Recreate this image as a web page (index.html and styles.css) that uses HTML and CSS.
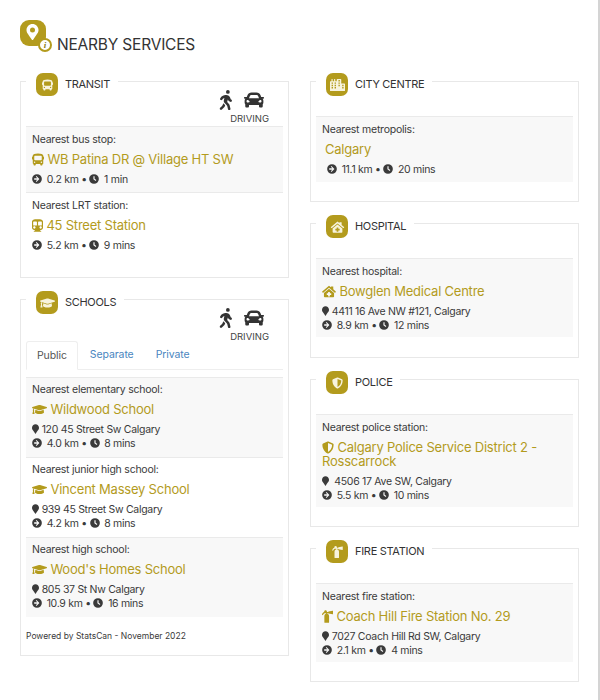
FILE: index.html
```html
<html>
<head>
    <link rel="stylesheet" href="styles.css">
</head>
<body>
<svg class="defs" width="0" height="0">
    <symbol id="i-pin" viewBox="0 0 384 512"><path d="M192 0C86 0 0 86 0 192c0 77 27 99 172 310 10 14 30 14 40 0 145-211 172-233 172-310C384 86 298 0 192 0z"/></symbol>
    <symbol id="i-pin-hole" viewBox="0 0 384 512"><path fill-rule="evenodd" d="M192 0C86 0 0 86 0 192c0 77 27 99 172 310 10 14 30 14 40 0 145-211 172-233 172-310C384 86 298 0 192 0zm0 272a80 80 0 1 1 0-160 80 80 0 0 1 0 160z"/></symbol>
    <symbol id="i-arrow" viewBox="0 0 512 512"><path fill-rule="evenodd" d="M256 8a248 248 0 1 1 0 496 248 248 0 0 1 0-496zm-28 97-34 34 78 77H112v80h160l-78 77 34 34 151-151z"/></symbol>
    <symbol id="i-clock" viewBox="0 0 512 512"><path fill-rule="evenodd" d="M256 8a248 248 0 1 1 0 496 248 248 0 0 1 0-496zm-30 104v158l116 84 34-46-90-66V112z"/></symbol>
    <symbol id="i-cap" viewBox="0 0 640 512"><path d="M622.34 153.2L343.4 67.5c-15.2-4.67-31.6-4.67-46.79 0L17.66 153.2c-23.54 7.23-23.54 38.36 0 45.59l48.63 14.94c-10.67 13.19-17.23 29.28-17.88 46.9C38.78 266.15 32 276.11 32 288c0 10.78 5.68 19.85 13.86 25.65L20.33 428.53C18.11 438.52 25.71 448 35.94 448h56.11c10.24 0 17.84-9.48 15.62-19.47L82.14 313.65C90.32 307.85 96 298.78 96 288c0-11.57-6.47-21.25-15.66-26.87.76-15.02 8.44-28.3 20.69-36.72L296.6 284.5c9.06 2.78 26.44 6.25 46.79 0l278.95-85.7c23.55-7.24 23.55-38.36 0-45.6zM352.79 315.09c-28.53 8.76-52.84 3.92-65.59 0l-145.02-44.55L128 384c0 35.35 85.96 64 192 64s192-28.65 192-64l-14.18-113.47-145.03 44.56z"/></symbol>
    <symbol id="i-bus" viewBox="0 0 512 512"><path d="M488 128h-8V80c0-44.8-99.2-80-224-80S32 35.2 32 80v48h-8c-13.25 0-24 10.74-24 24v80c0 13.25 10.75 24 24 24h8v160c0 17.67 14.33 32 32 32v32c0 17.67 14.33 32 32 32h32c17.67 0 32-14.33 32-32v-32h192v32c0 17.67 14.33 32 32 32h32c17.67 0 32-14.33 32-32v-32h6.4c16 0 25.6-12.8 25.6-25.6V256h8c13.25 0 24-10.75 24-24v-80c0-13.26-10.75-24-24-24zM112 400c-17.67 0-32-14.33-32-32s14.33-32 32-32 32 14.33 32 32-14.33 32-32 32zm16-112c-17.67 0-32-14.33-32-32V128c0-17.67 14.33-32 32-32h256c17.67 0 32 14.33 32 32v128c0 17.67-14.33 32-32 32H128zm272 112c-17.67 0-32-14.33-32-32s14.33-32 32-32 32 14.33 32 32-14.33 32-32 32z"/></symbol>
    <symbol id="i-train" viewBox="0 0 448 512"><path d="M448 96v256c0 51.815-61.624 96-130.022 96l62.98 49.721C386.905 502.417 383.562 512 376 512H72c-7.578 0-10.892-9.594-4.957-14.279L130.022 448C61.82 448 0 403.954 0 352V96C0 42.981 64 0 128 0h192c65 0 128 42.981 128 96zM200 232V120c0-13.255-10.745-24-24-24H72c-13.255 0-24 10.745-24 24v112c0 13.255 10.745 24 24 24h104c13.255 0 24-10.745 24-24zm200 0V120c0-13.255-10.745-24-24-24H272c-13.255 0-24 10.745-24 24v112c0 13.255 10.745 24 24 24h104c13.255 0 24-10.745 24-24zm-48 56c-26.51 0-48 21.49-48 48s21.49 48 48 48 48-21.49 48-48-21.49-48-48-48zm-256 0c-26.51 0-48 21.49-48 48s21.49 48 48 48 48-21.49 48-48-21.49-48-48-48z"/></symbol>
    <symbol id="i-city" viewBox="0 0 640 512"><path fill-rule="evenodd" d="M616 192H480V24c0-13-11-24-24-24H312c-13 0-24 11-24 24v72h-64V16c0-9-7-16-16-16h-16c-9 0-16 7-16 16v80h-64V16c0-9-7-16-16-16H80c-9 0-16 7-16 16v80H24c-13 0-24 11-24 24v368c0 13 11 24 24 24h592c13 0 24-11 24-24V216c0-13-11-24-24-24zM128 404H68v-60h60zm0-100H68v-60h60zm0-100H68v-60h60zm128 200h-60v-60h60zm0-100h-60v-60h60zm0-100h-60v-60h60zm164 100h-60v-60h60zm0-100h-60v-60h60zm0-100h-60V44h60zm160 300h-60v-60h60zm0-100h-60v-60h60z"/></symbol>
    <symbol id="i-house" viewBox="0 0 576 512"><path fill-rule="evenodd" d="M288 20 10 252c-8 7-9 18-3 26l18 22c7 8 18 9 26 3L288 105l237 198c8 6 19 5 26-3l18-22c6-8 5-19-3-26L464 166V64c0-9-7-16-16-16h-64c-9 0-16 7-16 16v22zM288 147 80 320v144c0 18 14 32 32 32h352c18 0 32-14 32-32V320zm-36 129h72v56h56v72h-56v56h-72v-56h-56v-72h56z"/></symbol>
    <symbol id="i-shield" viewBox="0 0 512 512"><path d="M466.5 83.7l-192-80a48.15 48.15 0 0 0-36.9 0l-192 80C27.7 91.1 16 108.6 16 128c0 198.5 114.5 335.7 221.5 380.3 11.8 4.9 25.1 4.9 36.9 0C360.1 472.6 496 349.3 496 128c0-19.4-11.7-36.9-29.5-44.3zM256.1 446.3l-.1-381 175.9 73.3c-3.3 151.4-82.1 261.1-175.8 307.7z"/></symbol>
    <symbol id="i-fire" viewBox="0 0 448 512"><path d="M434.027 26.329l-168 28C254.693 56.218 256 67.8 256 72h-58.332C208.353 36.108 181.446 0 144 0c-39.435 0-66.368 39.676-52.228 76.203-52.039 13.051-75.381 54.213-90.049 90.884-4.923 12.307 1.063 26.274 13.37 31.197 12.317 4.926 26.279-1.075 31.196-13.37C75.058 112.99 106.964 120 168 120v27.076c-41.543 10.862-72 49.235-72 94.129V488c0 13.255 10.745 24 24 24h144c13.255 0 24-10.745 24-24V240c0-44.731-30.596-82.312-72-92.97V120h40c0 2.974-1.703 15.716 10.027 17.671l168 28C441.342 166.89 448 161.25 448 153.834V38.166c0-7.416-6.658-13.056-13.973-11.837z"/></symbol>
    <symbol id="i-walk" viewBox="0 0 320 512"><path d="M208 96a48 48 0 1 0 0-96 48 48 0 0 0 0 96zm95 152-23-12-10-30c-15-45-57-78-105-78-37 0-58 11-96 26-22 9-40 26-51 48l-7 14c-8 16-1 35 14 43 16 8 35 1 43-14l7-14c3-7 9-13 17-16l27-11-15 62c-5 21 1 43 15 59l60 65c7 8 12 17 14 27l18 74c5 17 22 28 39 23 17-4 28-22 23-39l-22-88c-3-11-8-21-16-29l-45-49 17-69 6 16c5 15 16 27 30 34l23 12c16 8 35 1 43-14 8-16 1-35-15-44zM73 386c-4 8-9 15-14 21L10 456c-13 13-13 33 0 46 12 12 32 12 45 0l58-58c6-6 11-13 14-21l13-30c-53-58-37-40-45-51z"/></symbol>
    <symbol id="i-car" viewBox="0 0 512 512"><path d="M499.99 176h-59.87l-16.64-41.6C406.38 91.63 365.57 64 319.5 64h-127c-46.06 0-86.88 27.63-103.99 70.4L71.87 176H12.01C4.2 176-1.53 183.34.37 190.91l6 24C7.7 220.25 12.5 224 18.01 224h20.07C24.65 235.73 16 252.78 16 272v48c0 16.12 6.16 30.67 16 41.93V416c0 17.67 14.33 32 32 32h32c17.67 0 32-14.33 32-32v-32h256v32c0 17.67 14.33 32 32 32h32c17.67 0 32-14.33 32-32v-54.07c9.84-11.25 16-25.8 16-41.93v-48c0-19.22-8.65-36.27-22.07-48H494c5.51 0 10.31-3.75 11.64-9.09l6-24c1.89-7.57-3.84-14.91-11.65-14.91zm-352.06-17.83c7.29-18.22 24.94-30.17 44.57-30.17h127c19.63 0 37.28 11.95 44.57 30.17L384 208H128l19.93-49.83zM96 319.8c-19.2 0-32-12.76-32-31.9S76.8 256 96 256s48 28.71 48 47.85-28.8 15.95-48 15.95zm320 0c-19.2 0-48 3.19-48-15.95S396.8 256 416 256s32 12.76 32 31.9-12.8 31.9-32 31.9z"/></symbol>
</svg>

<h1 class="page-title">
    <span class="title-icon">
        <svg class="title-pin"><use href="#i-pin-hole"/></svg>
        <span class="info-badge">i</span>
    </span>
    NEARBY SERVICES
</h1>

<div class="columns">
    <div class="column">
        <fieldset class="card">
            <legend><span class="badge"><svg><use href="#i-bus"/></svg></span>TRANSIT</legend>
            <div class="modes">
                <div class="mode-icons">
                    <svg class="walk"><use href="#i-walk"/></svg>
                    <svg class="car"><use href="#i-car"/></svg>
                </div>
                <div class="mode-label">DRIVING</div>
            </div>
            <div class="row shade">
                <div class="label">Nearest bus stop:</div>
                <div class="name"><svg class="name-icon"><use href="#i-bus"/></svg> WB Patina DR @ Village HT SW</div>
                <div class="meta"><svg><use href="#i-arrow"/></svg> 0.2 km &bull; <svg><use href="#i-clock"/></svg> 1 min</div>
            </div>
            <div class="row">
                <div class="label">Nearest LRT station:</div>
                <div class="name"><svg class="name-icon train"><use href="#i-train"/></svg> 45 Street Station</div>
                <div class="meta"><svg><use href="#i-arrow"/></svg> 5.2 km &bull; <svg><use href="#i-clock"/></svg> 9 mins</div>
            </div>
            <div class="card-end"></div>
        </fieldset>

        <fieldset class="card">
            <legend><span class="badge"><svg class="wide"><use href="#i-cap"/></svg></span>SCHOOLS</legend>
            <div class="modes">
                <div class="mode-icons">
                    <svg class="walk"><use href="#i-walk"/></svg>
                    <svg class="car"><use href="#i-car"/></svg>
                </div>
                <div class="mode-label">DRIVING</div>
            </div>
            <div class="tabs">
                <div class="tab active">Public</div>
                <div class="tab">Separate</div>
                <div class="tab">Private</div>
            </div>
            <div class="row shade">
                <div class="label">Nearest elementary school:</div>
                <div class="name"><svg class="name-icon cap"><use href="#i-cap"/></svg> Wildwood School</div>
                <div class="meta"><svg class="pin"><use href="#i-pin"/></svg> 120 45 Street Sw Calgary</div>
                <div class="meta tight"><svg><use href="#i-arrow"/></svg> 4.0 km &bull; <svg><use href="#i-clock"/></svg> 8 mins</div>
            </div>
            <div class="row">
                <div class="label">Nearest junior high school:</div>
                <div class="name"><svg class="name-icon cap"><use href="#i-cap"/></svg> Vincent Massey School</div>
                <div class="meta"><svg class="pin"><use href="#i-pin"/></svg> 939 45 Street Sw Calgary</div>
                <div class="meta tight"><svg><use href="#i-arrow"/></svg> 4.2 km &bull; <svg><use href="#i-clock"/></svg> 8 mins</div>
            </div>
            <div class="row shade">
                <div class="label">Nearest high school:</div>
                <div class="name"><svg class="name-icon cap"><use href="#i-cap"/></svg> Wood's Homes School</div>
                <div class="meta"><svg class="pin"><use href="#i-pin"/></svg> 805 37 St Nw Calgary</div>
                <div class="meta tight"><svg><use href="#i-arrow"/></svg> 10.9 km &bull; <svg><use href="#i-clock"/></svg> 16 mins</div>
            </div>
            <div class="powered">Powered by StatsCan - November 2022</div>
        </fieldset>
    </div>

    <div class="column right">
        <fieldset class="card">
            <legend><span class="badge"><svg class="wide"><use href="#i-city"/></svg></span>CITY CENTRE</legend>
            <div class="spacer"></div>
            <div class="row shade">
                <div class="label">Nearest metropolis:</div>
                <div class="name city">Calgary</div>
                <div class="meta city"><svg><use href="#i-arrow"/></svg> 11.1 km &bull; <svg><use href="#i-clock"/></svg> 20 mins</div>
            </div>
            <div class="card-end"></div>
        </fieldset>

        <fieldset class="card">
            <legend><span class="badge"><svg class="wide"><use href="#i-house"/></svg></span>HOSPITAL</legend>
            <div class="spacer"></div>
            <div class="row shade">
                <div class="label">Nearest hospital:</div>
                <div class="name"><svg class="name-icon house"><use href="#i-house"/></svg> Bowglen Medical Centre</div>
                <div class="meta"><svg class="pin"><use href="#i-pin"/></svg> 4411 16 Ave NW #121, Calgary</div>
                <div class="meta tight"><svg><use href="#i-arrow"/></svg> 8.9 km &bull; <svg><use href="#i-clock"/></svg> 12 mins</div>
            </div>
            <div class="card-end long"></div>
        </fieldset>

        <fieldset class="card">
            <legend><span class="badge"><svg><use href="#i-shield"/></svg></span>POLICE</legend>
            <div class="spacer"></div>
            <div class="row shade">
                <div class="label">Nearest police station:</div>
                <div class="name"><svg class="name-icon"><use href="#i-shield"/></svg> Calgary Police Service District 2 - Rosscarrock</div>
                <div class="meta"><svg class="pin"><use href="#i-pin"/></svg> &nbsp;4506 17 Ave SW, Calgary</div>
                <div class="meta tight"><svg><use href="#i-arrow"/></svg> 5.5 km &bull; <svg><use href="#i-clock"/></svg> 10 mins</div>
            </div>
            <div class="card-end"></div>
        </fieldset>

        <fieldset class="card">
            <legend><span class="badge"><svg><use href="#i-fire"/></svg></span>FIRE STATION</legend>
            <div class="spacer"></div>
            <div class="row shade">
                <div class="label">Nearest fire station:</div>
                <div class="name"><svg class="name-icon train"><use href="#i-fire"/></svg> Coach Hill Fire Station No. 29</div>
                <div class="meta"><svg class="pin"><use href="#i-pin"/></svg> 7027 Coach Hill Rd SW, Calgary</div>
                <div class="meta tight"><svg><use href="#i-arrow"/></svg> 2.1 km &bull; <svg><use href="#i-clock"/></svg> 4 mins</div>
            </div>
            <div class="card-end"></div>
        </fieldset>
    </div>
</div>
</body>
</html>
```

FILE: styles.css
```css
html, body {
    margin: 0;
    background: #fff;
    overflow: hidden;
    height: 700px;
}

body {
    font-family: "Inter", "Noto Sans", sans-serif;
    color: #3a3a3a;
    padding: 20px 0 0 20px;
    box-sizing: border-box;
    border-right: 2px solid #d4d4d4;
    font-size: 10.5px;
}

.defs {
    position: absolute;
}

svg {
    fill: currentColor;
}

.page-title {
    display: flex;
    align-items: flex-end;
    gap: 11px;
    margin: 0 0 11px;
    height: 37px;
    font-size: 15.5px;
    font-weight: 400;
    letter-spacing: -0.2px;
    line-height: 24px;
    color: #333;
}

.title-icon {
    position: relative;
    display: flex;
    align-items: center;
    justify-content: center;
    align-self: flex-start;
    width: 26px;
    height: 26px;
    border-radius: 9px;
    background: #b39b1d;
    color: #fff;
}

.title-pin {
    width: 13px;
    height: 16px;
    margin: 0 1px 3px 0;
}

.info-badge {
    position: absolute;
    left: 18px;
    top: 18px;
    width: 10px;
    height: 10px;
    border: 2px solid #b39b1d;
    border-radius: 50%;
    background: #fff;
    color: #8a7a10;
    font: italic bold 9px/10px "Liberation Serif", serif;
    text-align: center;
}

.columns {
    display: grid;
    grid-template-columns: 269px 269px;
    column-gap: 21px;
}

.column {
    display: flex;
    flex-direction: column;
    gap: 8px;
}

.card {
    margin: 0;
    padding: 0 5px;
    border: 1.5px solid #e8e8e8;
    min-width: 0;
}

.card legend {
    display: flex;
    align-items: flex-start;
    padding: 0 8px 0 10px;
    font-size: 11px;
    letter-spacing: -0.3px;
    line-height: 32px;
    color: #333;
    height: 26px;
}

.badge {
    display: flex;
    align-items: center;
    justify-content: center;
    width: 22px;
    height: 23px;
    margin: 5px 7px 0 0;
    border-radius: 7px;
    background: #b39b1d;
    color: #f7f3dd;
}

.badge svg {
    width: 11px;
    height: 12px;
}

.badge svg.wide {
    width: 15px;
}

.modes {
    display: flex;
    flex-direction: column;
    align-items: flex-end;
    height: 36px;
    margin-top: -4px;
    padding-right: 14px;
}

.mode-icons {
    display: flex;
    align-items: center;
    gap: 11px;
    margin-right: 5px;
    color: #333;
}

.walk {
    width: 14px;
    height: 20px;
}

.car {
    width: 20px;
    height: 20px;
}

.mode-label {
    font-size: 9.5px;
    line-height: 12px;
    margin-top: 3px;
    color: #444;
}

.tabs {
    display: flex;
    height: 28px;
    margin-top: -3px;
    margin-bottom: 7px;
    border-bottom: 1px solid #eee;
}

.tab {
    padding: 0 11px;
    line-height: 28px;
    color: #4a86c0;
    font-size: 10.5px;
    letter-spacing: -0.1px;
}

.active {
    padding: 0 10px;
    margin-right: 1px;
    color: #555;
    border: 1px solid #eee;
    border-bottom: 1px solid #fff;
    height: 27px;
    border-radius: 3px 3px 0 0;
}

.row {
    padding: 6px 6px 5px;
    border-top: 1px solid #eaeaea;
}

.tabs ~ .row {
    padding: 5px 6px 6px;
}

.shade {
    background: #f8f8f8;
}

.label {
    line-height: 14px;
    letter-spacing: -0.23px;
}

.name {
    margin-top: 5px;
    font-size: 13px;
    letter-spacing: -0.22px;
    line-height: 14px;
    color: #b39b1d;
}

.name-icon {
    width: 12px;
    height: 13px;
    vertical-align: -2px;
}

.name-icon.train {
    width: 11px;
}

.name-icon.house {
    width: 14px;
}

.name-icon.cap {
    width: 15px;
}

.name.city {
    margin-left: 3px;
}

.meta {
    margin-top: 7px;
    line-height: 14px;
    letter-spacing: -0.3px;
}

.meta.city {
    margin-left: 5px;
}

.meta.tight {
    margin-top: 0;
}

.right .meta.tight {
    margin-bottom: -1px;
}

.meta svg {
    width: 10px;
    height: 10px;
    margin-right: 2px;
    vertical-align: -1px;
}

.meta svg.pin {
    width: 7px;
    height: 10px;
    margin-right: 0;
}

.powered {
    font-size: 8.5px;
    margin-top: 13px;
    height: 25px;
    line-height: 12px;
}

.card-end {
    height: 19px;
}

.card-end.long {
    height: 20px;
}

.spacer {
    height: 22px;
}
```
